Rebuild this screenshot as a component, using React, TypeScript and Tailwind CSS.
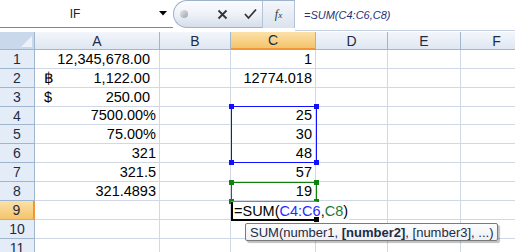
import React from "react";

const COLS = ["A", "B", "C", "D", "E", "F"];
const COL_W = ["w-[125px]", "w-[71px]", "w-[85px]", "w-[72px]", "w-[73px]", "w-[72px]"];
const ROW_H = ["h-[19px]", "h-[19px]", "h-[19px]", "h-[18px]", "h-[19px]", "h-[19px]", "h-[19px]", "h-[19px]", "h-[19px]", "h-[19px]", "h-[19px]"];

type Cell = { text?: string; prefix?: string; pad?: string };

const DATA: Record<string, Cell> = {
  A1: { text: "12,345,678.00", pad: "pr-[9px]" },
  A2: { text: "1,122.00", prefix: "฿", pad: "pr-[9px]" },
  A3: { text: "250.00", prefix: "$", pad: "pr-[9px]" },
  A4: { text: "7500.00%" },
  A5: { text: "75.00%" },
  A6: { text: "321" },
  A7: { text: "321.5" },
  A8: { text: "321.4893" },
  C1: { text: "1" },
  C2: { text: "12774.018" },
  C4: { text: "25" },
  C5: { text: "30" },
  C6: { text: "48" },
  C7: { text: "57" },
  C8: { text: "19" },
};

function Handle({ className }: { className: string }) {
  return <div className={`absolute h-[5px] w-[5px] ${className}`} />;
}

export default function App() {
  return (
    <div className="relative h-[252px] w-[515px] overflow-hidden bg-white font-['Liberation_Sans',Arial,sans-serif] text-black">
      {/* Formula bar */}
      <div className="flex h-[32px] w-full">
        <div className="relative flex h-[28px] w-[173px] items-center border-b border-[#6f89ad] bg-white">
          <span className="w-[150px] text-center text-[12px] text-[#222]">IF</span>
          <svg className="absolute left-[159px] top-[11px]" width="8" height="5" viewBox="0 0 8 5">
            <path d="M0 0 H8 L4 4.5 Z" fill="#000" />
          </svg>
        </div>
        <div className="flex h-[28px] items-center rounded-l-full border border-r-0 border-[#9fb2cc] bg-gradient-to-b from-[#fbfcfe] via-[#eef2f8] to-[#d5deeb] pl-[6px]">
          <div className="h-[8px] w-[8px] rounded-full bg-gradient-to-br from-[#e8eaee] to-[#9aa3ad]" />
          <svg className="ml-[29px]" width="11" height="11" viewBox="0 0 11 11">
            <path d="M1.5 1.5 L9.5 9.5 M9.5 1.5 L1.5 9.5" stroke="#333" strokeWidth="1.8" />
          </svg>
          <svg className="ml-[16px]" width="13" height="12" viewBox="0 0 13 12">
            <path d="M1 6 L4.5 10 L12 1.5" stroke="#333" strokeWidth="1.8" fill="none" />
          </svg>
          <div className="ml-[5px] flex h-[27px] w-[33px] items-center justify-center border-x border-[#b4c3d8] bg-gradient-to-b from-[#f4f7fb] to-[#dbe3ee]">
            <span className="font-['Liberation_Serif',serif] text-[12px] italic text-[#333]">
              f<span className="text-[9px]">x</span>
            </span>
          </div>
        </div>
        <div className="flex h-[31px] flex-1 items-start border-b border-[#c5d1e0] bg-white pl-[9px] pt-[9px]">
          <span className="text-[11px] italic leading-[12px] text-[#23327a]">=SUM(C4:C6,C8)</span>
        </div>
      </div>

      {/* Grid */}
      <div className="flex flex-col">
        <div className="flex h-[18px]">
          <div className="relative w-[35px] shrink-0 border-b border-r border-[#9eb6ce] bg-[#cad8ec]">
            <svg className="absolute bottom-[2px] right-[2px]" width="11" height="11" viewBox="0 0 11 11">
              <path d="M11 0 V11 H0 Z" fill="#eef2f8" />
            </svg>
          </div>
          {COLS.map((c, i) => (
            <div
              key={c}
              className={`${COL_W[i]} flex shrink-0 items-center justify-center text-[14px] leading-none ${
                c === "C"
                  ? "border-b-2 border-r border-b-[#f29536] border-r-[#e3a857] bg-gradient-to-b from-[#fbe1a8] to-[#f4c46a] text-[#1e2b45]"
                  : "border-b border-r border-[#9eb6ce] bg-gradient-to-b from-[#f3f6fb] to-[#dfe7f2] text-[#1e2b45]"
              }`}
            >
              {c}
            </div>
          ))}
        </div>
        {ROW_H.map((h, r) => {
          const row = r + 1;
          const hot = row === 9;
          return (
            <div key={row} className={`flex ${h}`}>
              <div
                className={`flex w-[35px] shrink-0 items-center justify-center text-[14px] leading-none text-[#1e2b45] ${
                  hot
                    ? "border-b border-r-2 border-b-[#e3a857] border-r-[#f29536] bg-gradient-to-b from-[#fbe1a8] to-[#f4c46a]"
                    : "border-b border-r border-[#9eb6ce] bg-[#e4ecf7]"
                }`}
              >
                {row}
              </div>
              {COLS.map((c, i) => {
                const cell = DATA[`${c}${row}`];
                return (
                  <div
                    key={c}
                    className={`${COL_W[i]} flex shrink-0 items-center justify-between border-b border-r border-[#d0d7e5] text-[14.5px] leading-none ${
                      cell?.pad ?? "pr-[3px]"
                    }`}
                  >
                    <span className="pl-[9px]">{cell?.prefix ?? ""}</span>
                    <span>{cell?.text ?? ""}</span>
                  </div>
                );
              })}
            </div>
          );
        })}
      </div>

      {/* Reference box C4:C6 */}
      <div className="absolute left-[231px] top-[106px] h-[57px] w-[86px] border border-[#1010ff]">
        <Handle className="-left-[3px] -top-[3px] bg-[#1010ff]" />
        <Handle className="-right-[3px] -top-[3px] bg-[#1010ff]" />
        <Handle className="-bottom-[3px] -left-[3px] bg-[#1010ff]" />
        <Handle className="-bottom-[3px] -right-[3px] bg-[#1010ff]" />
      </div>

      {/* Reference box C8 */}
      <div className="absolute left-[231px] top-[182px] h-[20px] w-[86px] border border-[#108010]">
        <Handle className="-left-[3px] -top-[3px] bg-[#108010]" />
        <Handle className="-right-[3px] -top-[3px] bg-[#108010]" />
        <Handle className="-bottom-[3px] -left-[3px] bg-[#108010]" />
        <Handle className="-bottom-[3px] -right-[3px] bg-[#108010]" />
      </div>

      {/* In-cell edit C9 */}
      <div className="absolute left-[231px] top-[201px] h-[1px] w-[86px] bg-[#d050c8]" />
      <div className="absolute left-[231px] top-[202px] flex h-[19px] w-[118px] items-center border-l-2 border-black bg-white pl-[1px] text-[14.5px] leading-none">
        <span>=SUM(</span>
        <span className="text-[#2a2aff]">C4:C6</span>
        <span>,</span>
        <span className="text-[#1a7a3a]">C8</span>
        <span>)</span>
      </div>
      <div className="absolute left-[231px] top-[219px] h-[2px] w-[86px] bg-black" />
      <div className="absolute left-[314px] top-[217px] h-[5px] w-[5px] bg-black" />

      {/* Function tooltip */}
      <div className="absolute left-[245px] top-[223px] flex h-[18px] w-[253px] items-center whitespace-pre rounded-[2px] border border-[#7a7a7a] bg-gradient-to-b from-[#fdfdfe] to-[#eef0f4] pl-[4px] text-[13px] leading-none text-[#1e2b45] shadow-[2px_2px_1px_rgba(0,0,0,0.25)]">
        <span>SUM(number1, </span>
        <span className="font-bold">[number2]</span>
        <span>, [number3], ...)</span>
      </div>
    </div>
  );
}
